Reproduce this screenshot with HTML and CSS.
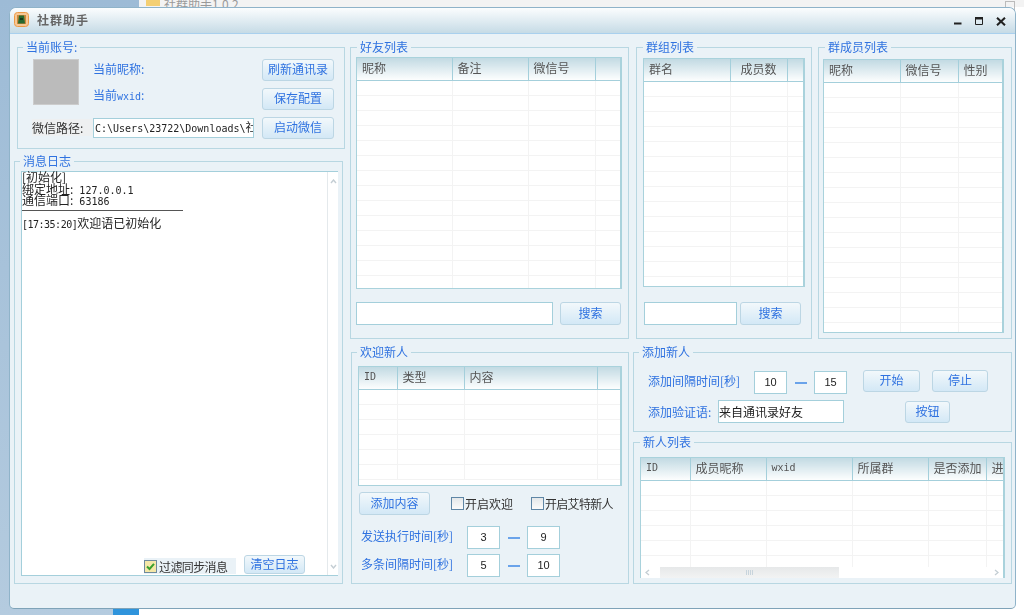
FILE: index.html
```html
<!DOCTYPE html>
<html lang="zh-CN">
<head>
  <meta charset="UTF-8" />
  <title>社群助手</title>
  <link rel="stylesheet" href="styles.css">
</head>
<body>
  <div class="explorer">
    <div class="explorer-bar">
      <svg class="folder" width="14" height="8" viewBox="0 0 14 8"><path d="M0 0h14v8H0z" fill="#f4cf73"/></svg>
      <span>社群助手1.0.2</span>
    </div>
    <div class="explorer-btn"></div>
  </div>
  <div class="taskbit"></div>

  <div class="window">
    <header class="titlebar">
      <svg class="app-icon" width="15" height="15" viewBox="0 0 15 15">
        <rect x="0.5" y="0.5" width="14" height="14" rx="3" fill="#f7c795" stroke="#ee9a45"/>
        <rect x="3" y="3" width="9" height="9" fill="#c98a3c"/>
        <path d="M5 3.5h5l1 8H4z" fill="#27682f"/>
        <path d="M6 6h3v2H6z" fill="#16381c"/>
      </svg>
      <span class="app-title">社群助手</span>
      <div class="win-controls">
        <svg width="8" height="8" viewBox="0 0 8 8"><path d="M0 5.5h7.5v2H0z" fill="#222"/></svg>
        <svg width="8" height="8" viewBox="0 0 8 8"><path d="M.5.5h7v7h-7z" fill="none" stroke="#222"/><path d="M0 0h8v2.5H0z" fill="#222"/></svg>
        <svg width="10" height="9" viewBox="0 0 10 9"><path d="M1 .7l8 7.6M9 .7L1 8.3" stroke="#222" stroke-width="2"/></svg>
      </div>
    </header>

    <main class="content">
      <section class="col col-left">
        <div class="group account">
          <span class="group-title">当前账号:</span>
          <div class="account-grid">
            <div class="avatar"></div>
            <span class="blue-label nick">当前昵称:</span>
            <button class="btn btn-wide">刷新通讯录</button>
            <span class="blue-label wxid">当前<span class="en">wxid</span>:</span>
            <button class="btn btn-wide">保存配置</button>
            <span class="path-label">微信路径:</span>
            <div class="field path-field"><span class="en">C:\Users\23722\Downloads\</span>社群助手</div>
            <button class="btn btn-wide">启动微信</button>
          </div>
        </div>

        <div class="group log">
          <span class="group-title">消息日志</span>
          <div class="log-box">
            <div class="log-main">
              <div class="log-text">
                <div>[初始化]</div>
                <div>绑定地址:<span class="en"> 127.0.0.1</span></div>
                <div>通信端口:<span class="en"> 63186</span></div>
                <div class="log-rule"></div>
                <div class="log-line"><span class="en">[17:35:20]</span>欢迎语已初始化</div>
              </div>
              <div class="log-actions">
                <label class="check check-chip">
                  <svg width="13" height="13" viewBox="0 0 13 13"><rect x=".5" y=".5" width="12" height="12" fill="#f4e7a8" stroke="#6f8a9c"/><path d="M3 6.5l2.5 2.5L10 3.8" fill="none" stroke="#3aa02c" stroke-width="2"/></svg>
                  过滤同步消息
                </label>
                <button class="btn btn-clear">清空日志</button>
              </div>
            </div>
            <div class="vscroll">
              <svg width="7" height="5" viewBox="0 0 7 5"><path d="M1 4l2.5-3L6 4" fill="none" stroke="#c4ced4" stroke-width="1.4"/></svg>
              <svg width="7" height="5" viewBox="0 0 7 5"><path d="M1 1l2.5 3L6 1" fill="none" stroke="#c4ced4" stroke-width="1.4"/></svg>
            </div>
          </div>
        </div>
      </section>

      <section class="col col-mid">
        <div class="group friends">
          <span class="group-title title-far">好友列表</span>
          <div class="table-wrap friends-table">
            <table>
              <colgroup><col width="95"><col width="76"><col width="67"><col></colgroup>
              <thead><tr><th>昵称</th><th>备注</th><th>微信号</th><th></th></tr></thead>
              <tbody>
                <tr><td></td><td></td><td></td><td></td></tr>
                <tr><td></td><td></td><td></td><td></td></tr>
                <tr><td></td><td></td><td></td><td></td></tr>
                <tr><td></td><td></td><td></td><td></td></tr>
                <tr><td></td><td></td><td></td><td></td></tr>
                <tr><td></td><td></td><td></td><td></td></tr>
                <tr><td></td><td></td><td></td><td></td></tr>
                <tr><td></td><td></td><td></td><td></td></tr>
                <tr><td></td><td></td><td></td><td></td></tr>
                <tr><td></td><td></td><td></td><td></td></tr>
                <tr><td></td><td></td><td></td><td></td></tr>
                <tr><td></td><td></td><td></td><td></td></tr>
                <tr><td></td><td></td><td></td><td></td></tr>
                <tr><td></td><td></td><td></td><td></td></tr>
              </tbody>
            </table>
          </div>
          <div class="search-row">
            <div class="field search-wide"></div>
            <button class="btn btn-search">搜索</button>
          </div>
        </div>

        <div class="group welcome">
          <span class="group-title">欢迎新人</span>
          <div class="table-wrap welcome-table">
            <table>
              <colgroup><col width="38"><col width="67"><col width="133"><col></colgroup>
              <thead><tr><th class="en-th">ID</th><th>类型</th><th>内容</th><th></th></tr></thead>
              <tbody>
                <tr><td></td><td></td><td></td><td></td></tr>
                <tr><td></td><td></td><td></td><td></td></tr>
                <tr><td></td><td></td><td></td><td></td></tr>
                <tr><td></td><td></td><td></td><td></td></tr>
                <tr><td></td><td></td><td></td><td></td></tr>
                <tr><td></td><td></td><td></td><td></td></tr>
              </tbody>
            </table>
          </div>
          <div class="welcome-actions">
            <button class="btn btn-add">添加内容</button>
            <label class="check check-one"><span class="box"></span>开启欢迎</label>
            <label class="check check-two"><span class="box"></span>开启艾特新人</label>
          </div>
          <div class="time-row">
            <span class="blue-label time-label">发送执行时间[秒]</span>
            <div class="field num">3</div><span class="dash"></span><div class="field num">9</div>
          </div>
          <div class="time-row">
            <span class="blue-label time-label">多条间隔时间[秒]</span>
            <div class="field num">5</div><span class="dash"></span><div class="field num">10</div>
          </div>
        </div>
      </section>

      <section class="col col-right">
        <div class="top-pair">
          <div class="group groups">
            <span class="group-title title-far">群组列表</span>
            <div class="table-wrap groups-table">
              <table>
                <colgroup><col width="86"><col width="57"><col></colgroup>
                <thead><tr><th>群名</th><th class="center">成员数</th><th></th></tr></thead>
                <tbody>
                  <tr><td></td><td></td><td></td></tr>
                  <tr><td></td><td></td><td></td></tr>
                  <tr><td></td><td></td><td></td></tr>
                  <tr><td></td><td></td><td></td></tr>
                  <tr><td></td><td></td><td></td></tr>
                  <tr><td></td><td></td><td></td></tr>
                  <tr><td></td><td></td><td></td></tr>
                  <tr><td></td><td></td><td></td></tr>
                  <tr><td></td><td></td><td></td></tr>
                  <tr><td></td><td></td><td></td></tr>
                  <tr><td></td><td></td><td></td></tr>
                  <tr><td></td><td></td><td></td></tr>
                  <tr><td></td><td></td><td></td></tr>
                  <tr><td></td><td></td><td></td></tr>
                </tbody>
              </table>
            </div>
            <div class="search-row group-search">
              <div class="field search-narrow"></div>
              <button class="btn btn-search">搜索</button>
            </div>
          </div>

          <div class="group members">
            <span class="group-title title-far">群成员列表</span>
            <div class="table-wrap members-table">
              <table>
                <colgroup><col width="76"><col width="58"><col></colgroup>
                <thead><tr><th>昵称</th><th>微信号</th><th>性别</th></tr></thead>
                <tbody>
                  <tr><td></td><td></td><td></td></tr>
                  <tr><td></td><td></td><td></td></tr>
                  <tr><td></td><td></td><td></td></tr>
                  <tr><td></td><td></td><td></td></tr>
                  <tr><td></td><td></td><td></td></tr>
                  <tr><td></td><td></td><td></td></tr>
                  <tr><td></td><td></td><td></td></tr>
                  <tr><td></td><td></td><td></td></tr>
                  <tr><td></td><td></td><td></td></tr>
                  <tr><td></td><td></td><td></td></tr>
                  <tr><td></td><td></td><td></td></tr>
                  <tr><td></td><td></td><td></td></tr>
                  <tr><td></td><td></td><td></td></tr>
                  <tr><td></td><td></td><td></td></tr>
                  <tr><td></td><td></td><td></td></tr>
                  <tr><td></td><td></td><td></td></tr>
                  <tr><td></td><td></td><td></td></tr>
                </tbody>
              </table>
            </div>
          </div>
        </div>

        <div class="group add-new">
          <span class="group-title">添加新人</span>
          <div class="add-row">
            <span class="blue-label add-label">添加间隔时间[秒]</span>
            <div class="field num">10</div><span class="dash"></span><div class="field num">15</div>
            <button class="btn btn-start">开始</button>
            <button class="btn btn-stop">停止</button>
          </div>
          <div class="add-row add-row-2">
            <span class="blue-label verify-label">添加验证语:</span>
            <div class="field verify">来自通讯录好友</div>
            <button class="btn btn-misc">按钮</button>
          </div>
        </div>

        <div class="group new-list">
          <span class="group-title title-far">新人列表</span>
          <div class="table-wrap new-table">
            <table>
              <colgroup><col width="49"><col width="76"><col width="86"><col width="76"><col width="58"><col></colgroup>
              <thead><tr><th class="en-th">ID</th><th>成员昵称</th><th class="en-th">wxid</th><th>所属群</th><th>是否添加</th><th>进群</th></tr></thead>
              <tbody>
                <tr><td></td><td></td><td></td><td></td><td></td><td></td></tr>
                <tr><td></td><td></td><td></td><td></td><td></td><td></td></tr>
                <tr><td></td><td></td><td></td><td></td><td></td><td></td></tr>
                <tr><td></td><td></td><td></td><td></td><td></td><td></td></tr>
                <tr><td></td><td></td><td></td><td></td><td></td><td></td></tr>
                <tr><td></td><td></td><td></td><td></td><td></td><td></td></tr>
              </tbody>
            </table>
            <div class="hscroll">
              <svg class="hs-arrow" width="5" height="7" viewBox="0 0 5 7"><path d="M4 1L1 3.5 4 6" fill="none" stroke="#c4ced4" stroke-width="1.3"/></svg>
              <div class="hs-thumb"><span class="hs-grip"></span></div>
              <svg class="hs-arrow" width="5" height="7" viewBox="0 0 5 7"><path d="M1 1l3 2.5L1 6" fill="none" stroke="#c4ced4" stroke-width="1.3"/></svg>
            </div>
          </div>
        </div>
      </section>
    </main>
  </div>
</body>
</html>
```

FILE: styles.css
```css
html, body {
  margin: 0;
  height: 100%;
  overflow: hidden;
}

body {
  position: relative;
  width: 1024px;
  height: 615px;
  background: linear-gradient(#9dbbd6, #b4cbdf);
  font-family: "Noto Sans CJK SC", "Liberation Sans", sans-serif;
  font-size: 12px;
  color: #333;
}

/* desktop behind the window */
.explorer {
  position: absolute;
  left: 139px;
  top: 0;
  right: 0;
  bottom: 0;
  background: #fff;
}

.explorer-bar {
  display: flex;
  align-items: flex-start;
  gap: 4px;
  height: 7px;
  padding-left: 7px;
  background: #f3f3f3;
  color: #999;
  line-height: 12px;
  overflow: hidden;
}

.folder {
  margin-top: -2px;
}

.explorer-bar span {
  margin-top: -2px;
}

.explorer-btn {
  position: absolute;
  right: 9px;
  top: 1px;
  width: 8px;
  height: 8px;
  border: 1px solid #bbb;
}

.taskbit {
  position: absolute;
  left: 113px;
  top: 604px;
  width: 26px;
  height: 11px;
  background: #2f94dc;
}

.window {
  position: absolute;
  left: 9px;
  top: 7px;
  width: 1007px;
  height: 602px;
  box-sizing: border-box;
  display: flex;
  flex-direction: column;
  background: #eaf2f7;
  border: 1px solid #8fb3c9;
  border-bottom-color: #7fa3b8;
  border-radius: 7px 7px 5px 5px;
  overflow: hidden;
  filter: blur(0.45px);
}

.titlebar {
  display: flex;
  align-items: center;
  height: 25px;
  flex: none;
  padding-left: 4px;
  background: linear-gradient(#fbfdfe, #c6dbe6);
  border-bottom: 1px solid #a9d0ee;
}

.app-icon {
  flex: none;
  margin-top: -2px;
}

.app-title {
  margin-top: -2px;
  margin-left: 8px;
  font-weight: bold;
  font-size: 12px;
  letter-spacing: 1px;
  color: #666;
}

.win-controls {
  display: flex;
  align-items: center;
  gap: 13px;
  margin-left: auto;
  margin-right: 9px;
  margin-top: 1px;
}

.content {
  flex: 1;
  display: flex;
  padding: 13px 0 0 4px;
}

.col {
  display: flex;
  flex-direction: column;
}

.col-left {
  width: 330px;
}

.col-mid {
  width: 279px;
  margin-left: 6px;
}

.col-right {
  width: 379px;
  margin-left: 4px;
}

.group {
  position: relative;
  box-sizing: border-box;
  border: 1px solid #b8d7e2;
}

.group-title {
  position: absolute;
  top: -9px;
  left: 5px;
  padding: 0 3px;
  background: #eaf2f7;
  color: #2f72e0;
  font-size: 12px;
  line-height: 15px;
}

.title-far {
  left: 6px;
}

.blue-label {
  color: #2f72e0;
  white-space: nowrap;
}

.en {
  font-family: "DejaVu Sans Mono", monospace;
  font-size: 10px;
  line-height: 0;
}

.btn {
  box-sizing: border-box;
  padding: 0 0 2px;
  border: 1px solid #bcd6e4;
  border-radius: 3px;
  background: linear-gradient(#f2f8fb, #d3e8f6);
  color: #2f72e0;
  font-family: inherit;
  font-size: 12px;
  line-height: 1;
}

.field {
  box-sizing: border-box;
  border: 1px solid #a4cfdb;
  background: #fff;
  color: #222;
  white-space: nowrap;
  overflow: hidden;
}

/* account */
.account {
  width: 328px;
  height: 102px;
  margin-left: 3px;
  padding: 11px 0 0 15px;
}

.account-grid {
  display: grid;
  grid-template-columns: 60px 169px 72px;
  grid-template-rows: 22px 22px 21px;
  row-gap: 7px;
  align-items: center;
}

.avatar {
  grid-row: 1 / span 2;
  align-self: start;
  width: 46px;
  height: 46px;
  background: #bbb;
  border: 1px solid #ccc;
  box-sizing: border-box;
}

.nick {
  margin-top: -3px;
}

.wxid {
  margin-top: -1px;
  align-self: start;
  line-height: 15px;
}

.btn-wide {
  height: 22px;
}

.path-label {
  margin-left: -1px;
  color: #333;
  background: #eef0f1;
  white-space: nowrap;
}

.path-field {
  width: 161px;
  height: 20px;
  padding-left: 1px;
  line-height: 16px;
}

/* log */
.log {
  width: 329px;
  height: 423px;
  margin-top: 12px;
  padding: 9px 5px 7px 6px;
}

.log-box {
  display: flex;
  height: 100%;
  box-sizing: border-box;
  border: 1px solid #a4cfdb;
  border-right: 0;
  background: #fff;
  width: 317px;
}

.log-main {
  flex: 1;
  display: flex;
  flex-direction: column;
}

.log-text {
  margin-top: -1px;
  line-height: 11.5px;
  color: #222;
}

.log-rule {
  width: 161px;
  height: 1px;
  margin-top: 4px;
  background: #555;
}

.log-line {
  margin-top: 6px;
}

.log-line .en {
  letter-spacing: -0.5px;
}

.log-actions {
  display: flex;
  align-items: flex-end;
  margin-top: auto;
  margin-left: 122px;
  margin-bottom: 1px;
}

.check {
  display: flex;
  align-items: center;
  gap: 1px;
  color: #333;
  white-space: nowrap;
}

.check-chip {
  width: 92px;
  height: 16px;
  gap: 2px;
  background: #eaf2f7;
  letter-spacing: -0.6px;
}

.btn-clear {
  width: 61px;
  height: 19px;
  margin-left: 8px;
}

.vscroll {
  display: flex;
  flex-direction: column;
  justify-content: space-between;
  align-items: center;
  box-sizing: border-box;
  width: 11px;
  padding: 7px 0 6px;
  border-left: 1px solid #e4e9ec;
  background: #fff;
}

/* tables */
.table-wrap {
  position: relative;
  box-sizing: border-box;
  border: 1px solid #a9d2dc;
  border-width: 1px 2px 1px 1px;
  background: #fff;
  overflow: hidden;
}

table {
  width: 100%;
  table-layout: fixed;
  border-collapse: collapse;
}

th {
  height: 22px;
  padding: 0 0 2px 5px;
  box-sizing: border-box;
  background: linear-gradient(#c2dae3, #fdfefe);
  border-right: 1px solid #a4cfdb;
  border-bottom: 1px solid #a4cfdb;
  color: #555;
  font-weight: normal;
  font-size: 12px;
  text-align: left;
  white-space: nowrap;
  overflow: hidden;
}

th:last-child {
  border-right: 0;
}

th.center {
  text-align: center;
  padding: 0 0 2px;
}

th.en-th {
  font-family: "DejaVu Sans Mono", monospace;
  font-size: 10px;
}

td {
  height: 14px;
  padding: 0;
  border-right: 1px solid #f3f3f3;
  border-bottom: 1px solid #f3f3f3;
}

td:last-child {
  border-right: 0;
}

/* friends */
.friends {
  width: 279px;
  height: 292px;
  padding: 9px 0 0 5px;
}

.friends-table {
  width: 266px;
  height: 232px;
}

.search-row {
  display: flex;
  gap: 7px;
  margin-top: 13px;
}

.search-wide {
  width: 197px;
  height: 23px;
}

.btn-search {
  width: 61px;
  height: 23px;
}

/* welcome */
.welcome {
  width: 278px;
  height: 232px;
  margin-top: 13px;
  margin-left: 1px;
  padding: 13px 0 0 6px;
}

.welcome-table {
  width: 264px;
  height: 120px;
}

.welcome-actions {
  display: flex;
  align-items: center;
  margin-top: 6px;
  margin-left: 1px;
}

.btn-add {
  width: 71px;
  height: 23px;
}

.box {
  width: 11px;
  height: 11px;
  border: 1px solid #5e86a6;
  background: linear-gradient(#e4e8ea, #fbfbfb);
}

.check-one {
  margin-left: 21px;
  margin-right: 18px;
  padding-bottom: 1px;
}

.check-two {
  padding-bottom: 1px;
  letter-spacing: -0.7px;
}

.time-row {
  display: flex;
  align-items: center;
  margin-left: 3px;
  margin-top: 11px;
}

.time-row + .time-row {
  margin-top: 5px;
}

.time-label {
  width: 106px;
  margin-bottom: 4px;
}

.num {
  width: 33px;
  height: 23px;
  line-height: 21px;
  text-align: center;
  font-family: "Liberation Sans", sans-serif;
  font-size: 11px;
}

.dash {
  width: 12px;
  height: 2px;
  margin: 0 7px 0 8px;
  background: #6aa3ea;
}

/* right column */
.top-pair {
  display: flex;
  gap: 6px;
  margin-left: 3px;
}

.groups {
  width: 176px;
  height: 292px;
  padding: 10px 0 0 6px;
}

.groups-table {
  width: 162px;
  height: 229px;
}

.group-search {
  gap: 3px;
  margin-top: 15px;
  margin-left: 1px;
}

.search-narrow {
  width: 93px;
  height: 23px;
}

.members {
  width: 194px;
  height: 292px;
  padding: 11px 0 0 4px;
}

.members-table {
  width: 181px;
  height: 274px;
}

.add-new {
  width: 379px;
  height: 80px;
  margin-top: 13px;
  padding: 18px 0 0 14px;
}

.add-row {
  display: flex;
  align-items: center;
}

.add-label {
  width: 106px;
  margin-bottom: 4px;
}

.btn-start {
  width: 57px;
  height: 22px;
  margin-left: 16px;
  margin-top: -4px;
}

.btn-stop {
  width: 56px;
  height: 22px;
  margin-left: 12px;
  margin-top: -4px;
}

.add-row-2 {
  margin-top: 6px;
}

.verify-label {
  width: 70px;
}

.verify {
  width: 126px;
  height: 23px;
  line-height: 21px;
}

.btn-misc {
  width: 45px;
  height: 22px;
  margin-left: 61px;
}

.new-list {
  width: 379px;
  height: 142px;
  margin-top: 10px;
  padding: 14px 0 0 6px;
}

.new-table {
  width: 365px;
  height: 121px;
  border-bottom: 0;
}

.hscroll {
  position: absolute;
  left: 0;
  right: 0;
  bottom: 0;
  display: flex;
  align-items: center;
  height: 11px;
  background: #fff;
}

.hs-arrow {
  flex: none;
  margin: 0 4px;
}

.hs-thumb {
  display: flex;
  align-items: center;
  justify-content: center;
  width: 179px;
  height: 100%;
  margin-right: auto;
  margin-left: 6px;
  background: linear-gradient(#e6e8e9, #f2f3f3);
}

.hs-grip {
  width: 7px;
  height: 5px;
  background: repeating-linear-gradient(90deg, #c8d4dc 0 1px, transparent 1px 2px);
}
```
